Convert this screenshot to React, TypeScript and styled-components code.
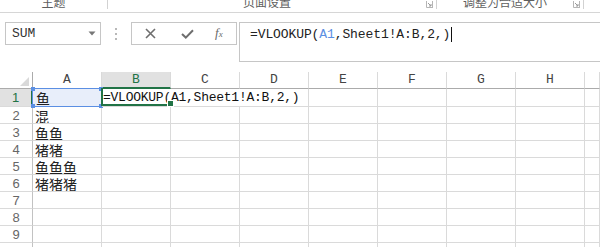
import React from "react";
import styled, { createGlobalStyle } from "styled-components";

const Global = createGlobalStyle`
  html, body { margin: 0; padding: 0; background: #fff; }
  body { width: 600px; height: 247px; overflow: hidden; font-family: "Liberation Sans", "Noto Sans CJK SC", sans-serif; }
`;

const GREEN = "#217346";
const GRID = "#dadada";
const HEAD_LINE = "#ababab";

const Page = styled.div`
  width: 600px;
  height: 247px;
  overflow: hidden;
  display: flex;
  flex-direction: column;
  background: #fff;
`;

/* ---------- ribbon strip (cut off) ---------- */
const Ribbon = styled.div`
  flex: none;
  height: 12px;
  display: flex;
  align-items: flex-start;
  border-bottom: 1px solid #d6d6d6;
  overflow: hidden;
`;

const RibbonGroup = styled.div<{ $w: number }>`
  flex: none;
  width: ${(p) => p.$w}px;
  height: 9px;
  box-sizing: border-box;
  border-right: 1px solid #d2d2d2;
  display: grid;
  grid-template-columns: 1fr auto;
  align-items: start;
`;

const GroupLabel = styled.div`
  margin-top: -5px;
  text-align: center;
  font-family: "Noto Sans CJK SC", sans-serif;
  font-size: 12px;
  line-height: 13px;
  color: #5e5e5e;
  white-space: nowrap;
`;

const Launcher = styled.svg`
  display: block;
  width: 7px;
  height: 7px;
  margin: 1px 3px 0 0;
`;

/* ---------- formula bar ---------- */
const FormulaArea = styled.div`
  flex: none;
  height: 59px;
  box-sizing: border-box;
  padding: 9px 0 0 5px;
  display: flex;
  align-items: flex-start;
`;

const NameBox = styled.div`
  flex: none;
  width: 96px;
  height: 23px;
  box-sizing: border-box;
  border: 1px solid #c6c6c6;
  display: flex;
  align-items: center;
  justify-content: space-between;
  padding: 0 4px 0 6px;
  font-family: "Liberation Mono", monospace;
  font-size: 13px;
  color: #333;
`;

const Grip = styled.div`
  flex: none;
  width: 30px;
  height: 23px;
  display: flex;
  align-items: center;
  justify-content: center;
`;

const ButtonBox = styled.div`
  flex: none;
  width: 106px;
  height: 23px;
  box-sizing: border-box;
  border: 1px solid #c6c6c6;
  display: flex;
  align-items: center;
  padding-left: 13px;
`;

const IconSlot = styled.div<{ $ml: number }>`
  margin-left: ${(p) => p.$ml}px;
  display: flex;
  align-items: center;
`;

const FxText = styled.span`
  font-family: "Liberation Serif", serif;
  font-style: italic;
  font-size: 13px;
  color: #6a6a6a;
  line-height: 13px;
  & > small {
    font-size: 9px;
  }
`;

const FormulaBox = styled.div`
  flex: 1;
  margin-left: 2px;
  height: 40px;
  box-sizing: border-box;
  border: 1px solid #c6c6c6;
  border-right: none;
  padding: 4px 0 0 10px;
  font-family: "Liberation Mono", monospace;
  font-size: 13px;
  letter-spacing: -0.1px;
  line-height: 15px;
  color: #222;
  display: flex;
  align-items: flex-start;
  white-space: pre;
`;

const Ref = styled.span`
  color: #5b8fe3;
`;

const Caret = styled.span`
  display: inline-block;
  width: 1px;
  height: 15px;
  background: #111;
  margin-left: 1px;
`;

/* ---------- grid ---------- */
const Sheet = styled.div`
  flex: none;
  display: grid;
  grid-template-columns: 33px repeat(8, 69px) 1fr;
  grid-template-rows: 17px 18px repeat(9, 17px);
`;

const Corner = styled.div`
  box-sizing: border-box;
  border-right: 1px solid ${HEAD_LINE};
  border-bottom: 1px solid ${HEAD_LINE};
  display: flex;
  align-items: flex-end;
  justify-content: flex-end;
  padding: 0 3px 2px 0;
`;

const ColHead = styled.div<{ $active?: boolean }>`
  box-sizing: border-box;
  border-right: 1px solid ${GRID};
  border-bottom: ${(p) => (p.$active ? `2px solid ${GREEN}` : `1px solid ${HEAD_LINE}`)};
  background: ${(p) => (p.$active ? "#e1e1e1" : "#fff")};
  color: ${(p) => (p.$active ? GREEN : "#444")};
  font-family: "Liberation Mono", monospace;
  font-size: 13px;
  line-height: 16px;
  text-align: center;
`;

const RowHead = styled.div<{ $active?: boolean }>`
  box-sizing: border-box;
  border-right: ${(p) => (p.$active ? `2px solid ${GREEN}` : `1px solid #c2c2c2`)};
  border-bottom: 1px solid ${GRID};
  background: ${(p) => (p.$active ? "#e1e1e1" : "#fff")};
  color: ${(p) => (p.$active ? GREEN : "#666")};
  font-family: "Liberation Sans", sans-serif;
  font-size: 13px;
  line-height: 17px;
  text-align: center;
  overflow: hidden;
`;

const Cell = styled.div`
  box-sizing: border-box;
  border-right: 1px solid ${GRID};
  border-bottom: 1px solid ${GRID};
  padding: 1px 0 0 2px;
  font-family: "Noto Sans CJK SC", sans-serif;
  font-size: 14px;
  line-height: 16px;
  color: #222;
  white-space: nowrap;
  overflow: hidden;
`;

const RefCell = styled(Cell)`
  position: relative;
  overflow: visible;
  background: #e8eefa;
  border: 1px solid #5b8fe3;
  margin: -1px 0 0 -1px;
  padding: 1px 0 0 3px;
  line-height: 17px;
`;

const Handle = styled.span<{ $top?: boolean; $left?: boolean }>`
  position: absolute;
  width: 4px;
  height: 4px;
  background: #5b8fe3;
  ${(p) => (p.$top ? "top: -2px;" : "bottom: -2px;")}
  ${(p) => (p.$left ? "left: -2px;" : "right: -2px;")}
`;

const EditCell = styled.div`
  grid-column: span 3;
  position: relative;
  box-sizing: border-box;
  border-right: 1px solid ${GRID};
  border-bottom: 1px solid ${GRID};
  padding-left: 1px;
  font-family: "Liberation Mono", monospace;
  font-size: 13px;
  letter-spacing: -0.25px;
  line-height: 17px;
  color: #111;
  white-space: pre;
`;

const ActiveFrame = styled.span`
  position: absolute;
  left: -1px;
  top: -1px;
  width: 70px;
  height: 18px;
  box-sizing: border-box;
  border-left: 2px solid ${GREEN};
  border-bottom: 2px solid ${GREEN};
  pointer-events: none;
`;

const FillHandle = styled.span`
  position: absolute;
  right: -3px;
  bottom: -3px;
  width: 5px;
  height: 5px;
  background: ${GREEN};
  border: 1px solid #fff;
  box-sizing: content-box;
`;

const LauncherIcon = () => (
  <Launcher viewBox="0 0 7 7">
    <path d="M0.5 0 V6.5 H7 M6.5 0 V7" stroke="#b5b5b5" strokeWidth="1" fill="none" />
    <path d="M2 2 L5 5 M3 5 H5 V3" stroke="#9a9a9a" strokeWidth="1" fill="none" />
  </Launcher>
);

const COLS = ["A", "B", "C", "D", "E", "F", "G", "H", ""];
const COL_A = ["混", "鱼鱼", "猪猪", "鱼鱼鱼", "猪猪猪", "", "", "", ""];

export default function App() {
  return (
    <Page>
      <Global />
      <Ribbon>
        <RibbonGroup $w={108}>
          <GroupLabel>主题</GroupLabel>
          <span />
        </RibbonGroup>
        <RibbonGroup $w={329}>
          <GroupLabel>页面设置</GroupLabel>
          <LauncherIcon />
        </RibbonGroup>
        <RibbonGroup $w={147}>
          <GroupLabel>调整为合适大小</GroupLabel>
          <LauncherIcon />
        </RibbonGroup>
      </Ribbon>

      <FormulaArea>
        <NameBox>
          <span>SUM</span>
          <svg width="8" height="5" viewBox="0 0 8 5">
            <path d="M0.5 0.5 H7.5 L4 4.5 Z" fill="#777" />
          </svg>
        </NameBox>
        <Grip>
          <svg width="2" height="12" viewBox="0 0 2 12">
            <rect x="0" y="0" width="2" height="2" fill="#b8b8b8" />
            <rect x="0" y="5" width="2" height="2" fill="#b8b8b8" />
            <rect x="0" y="10" width="2" height="2" fill="#b8b8b8" />
          </svg>
        </Grip>
        <ButtonBox>
          <IconSlot $ml={0}>
            <svg width="11" height="11" viewBox="0 0 11 11">
              <path d="M1 1 L10 10 M10 1 L1 10" stroke="#6e6e6e" strokeWidth="1.6" fill="none" />
            </svg>
          </IconSlot>
          <IconSlot $ml={25}>
            <svg width="13" height="10" viewBox="0 0 13 10">
              <path d="M1 5 L4.8 8.6 L12 1.2" stroke="#6e6e6e" strokeWidth="2" fill="none" />
            </svg>
          </IconSlot>
          <IconSlot $ml={21}>
            <FxText>
              f<small>x</small>
            </FxText>
          </IconSlot>
        </ButtonBox>
        <FormulaBox>
          <span>
            =VLOOKUP(<Ref>A1</Ref>,Sheet1!A:B,2,)
          </span>
          <Caret />
        </FormulaBox>
      </FormulaArea>

      <Sheet>
        <Corner>
          <svg width="9" height="9" viewBox="0 0 9 9">
            <path d="M9 0 V9 H0 Z" fill="#d9d9d9" />
          </svg>
        </Corner>
        {COLS.map((c, i) => (
          <ColHead key={"h" + i} $active={c === "B"}>
            {c}
          </ColHead>
        ))}

        <RowHead $active>1</RowHead>
        <RefCell>
          鱼
          <Handle $top $left />
          <Handle $top />
          <Handle $left />
          <Handle />
        </RefCell>
        <EditCell>
          =VLOOKUP(A1,Sheet1!A:B,2,)
          <ActiveFrame>
            <FillHandle />
          </ActiveFrame>
        </EditCell>
        {COLS.slice(4).map((_, i) => (
          <Cell key={"r1" + i} />
        ))}

        {COL_A.map((txt, r) => (
          <React.Fragment key={"row" + r}>
            <RowHead>{r + 2}</RowHead>
            <Cell>{txt}</Cell>
            {COLS.slice(1).map((_, i) => (
              <Cell key={i} />
            ))}
          </React.Fragment>
        ))}
      </Sheet>
    </Page>
  );
}
